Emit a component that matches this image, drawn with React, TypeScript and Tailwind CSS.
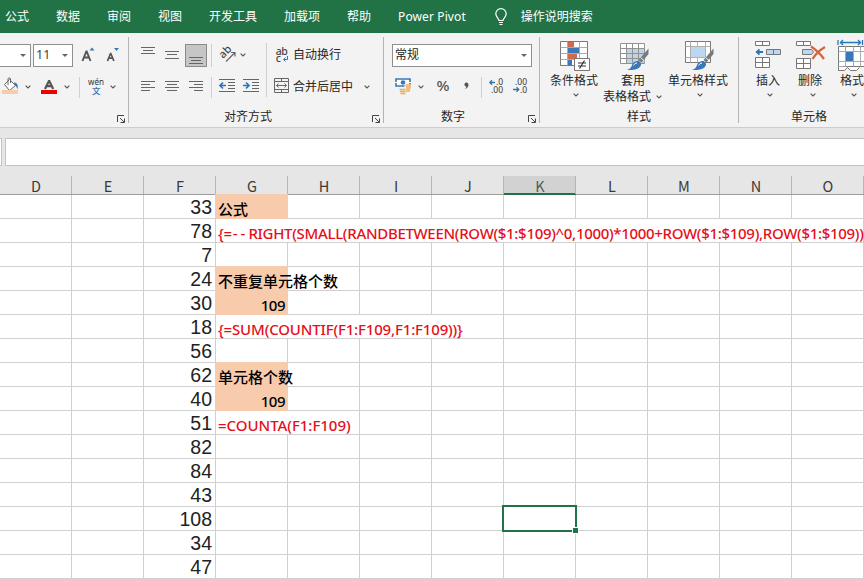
import type { ReactNode } from 'react';

const TABS = [
  { label: '公式', pos: 'ml-[5px]' },
  { label: '数据', pos: 'ml-[27px]' },
  { label: '审阅', pos: 'ml-[27px]' },
  { label: '视图', pos: 'ml-[27px]' },
  { label: '开发工具', pos: 'ml-[27px]' },
  { label: '加载项', pos: 'ml-[27px]' },
  { label: '帮助', pos: 'ml-[27px]' },
  { label: 'Power Pivot', pos: 'ml-[27px] tracking-[0.1px]' },
];

const COLUMNS = ['D', 'E', 'F', 'G', 'H', 'I', 'J', 'K', 'L', 'M', 'N', 'O'];

type Kind = 'title' | 'formula' | 'number';
type Row = { f: number; g?: ReactNode; kind?: Kind; span?: number; tracking?: string; selected?: boolean };

// span = how many columns the text of column G spills over
const ROWS: Row[] = [
  { f: 33, g: '公式', kind: 'title' },
  {
    f: 78,
    g: (
      <span>
        {'{='}
        <span className="pl-px tracking-[3px]">--</span>
        {'RIGHT(SMALL(RANDBETWEEN(ROW($1:$109)^0,1000)*1000+ROW($1:$109),ROW($1:$109)))}'}
      </span>
    ),
    kind: 'formula',
    span: 9,
    tracking: 'tracking-[-0.31px]',
  },
  { f: 7 },
  { f: 24, g: '不重复单元格个数', kind: 'title', span: 2 },
  { f: 30, g: '109', kind: 'number' },
  { f: 18, g: '{=SUM(COUNTIF(F1:F109,F1:F109))}', kind: 'formula', span: 4, tracking: 'tracking-[-0.16px]' },
  { f: 56 },
  { f: 62, g: '单元格个数', kind: 'title', span: 2 },
  { f: 40, g: '109', kind: 'number' },
  { f: 51, g: '=COUNTA(F1:F109)', kind: 'formula', span: 2, tracking: 'tracking-[-0.03px]' },
  { f: 82 },
  { f: 84 },
  { f: 43 },
  { f: 108, selected: true },
  { f: 34 },
  { f: 47 },
];

const SPAN: Record<number, string> = {
  1: 'col-span-1',
  2: 'col-span-2',
  4: 'col-span-4',
  9: 'col-span-9',
};

const KIND: Record<Kind, string> = {
  title: 'pl-[2px] pt-[3px] text-[15px] font-medium text-black',
  formula: "pl-[2px] pt-[6px] font-['Noto_Sans',sans-serif] text-[15px] font-medium text-[#e60f1a]",
  number: "justify-end pr-[2px] pt-[6px] font-['Noto_Sans',sans-serif] text-[15px] font-medium tracking-[-0.5px] text-black",
};

// Ribbon icons are drawn 1:1, as high as the row they sit in
function Icon({ w, h = 24, className = '', children }: { w: number; h?: number; className?: string; children: ReactNode }) {
  return (
    <svg width={w} height={h} viewBox={`0 0 ${w} ${h}`} className={'shrink-0 overflow-visible ' + className} fill="none">
      {children}
    </svg>
  );
}

function Chevron({ className = '' }: { className?: string }) {
  return (
    <svg width="6" height="4" viewBox="0 0 6 4" className={'shrink-0 ' + className} fill="none">
      <path d="M.6.6 3 3 5.4.6" stroke="#555" strokeWidth="1.1" />
    </svg>
  );
}

function Caret({ className = '' }: { className?: string }) {
  return (
    <svg width="6" height="3" viewBox="0 0 6 3" className={'shrink-0 ' + className}>
      <path d="M0 0h6L3 3z" fill="#666" />
    </svg>
  );
}

function Launcher() {
  return (
    <svg width="8" height="8" viewBox="0 0 8 8" className="mr-[3px] mb-[3px] shrink-0 self-end" fill="none" stroke="#444">
      <path d="M.5 7V.5H7M3 3l4 4M7.5 3.500V7.5H3.500" />
    </svg>
  );
}

function Divider() {
  return <div className="mt-1 h-[86px] w-px shrink-0 bg-[#b4b4b4]" />;
}

function Group({ width, label, launcher, labelPos = '', children }: { width: string; label?: string; launcher?: boolean; labelPos?: string; children: ReactNode }) {
  return (
    <div className={'flex shrink-0 flex-col ' + width}>
      {children}
      <div className="mt-auto flex h-[19px] items-center pb-px">
        <span className={'flex-1 ' + labelPos}>{label}</span>
        {launcher && <Launcher />}
      </div>
    </div>
  );
}

function BigButton({ className, icon, children }: { className: string; icon: ReactNode; children: ReactNode }) {
  return (
    <div className={'flex shrink-0 flex-col items-center whitespace-nowrap ' + className}>
      {icon}
      {children}
    </div>
  );
}

function Brush() {
  return (
    <>
      <path d="M28.500 7.500 18.500 19l3 2.500 7-8.500z" fill="#7a7a7a" />
      <path d="m20.500 16.500 4 3.500" stroke="#f3f3f3" />
      <path d="M17 20c2-.5 4.500 1.500 4 4-.8 3.500-6 5.500-14 5 3.500-1.200 4-2.500 5-5 .8-2.300 2.500-3.600 5-4z" fill="#3a78b8" />
      <path d="M13.500 24.500c.8-1.500 2-2.500 3.500-2.500" stroke="#fff" />
    </>
  );
}

function FontGroup() {
  return (
    <Group width="w-32" launcher>
      <div className="mt-[10px] flex h-6 items-center">
        <div className="flex h-[23px] w-[31px] items-center justify-end border border-l-0 border-[#8f8f8f] bg-white pr-[4px]">
          <Caret />
        </div>
        <div className="ml-[2px] flex h-[23px] w-10 items-center justify-between border border-[#8f8f8f] bg-white pr-[4px] pl-[2px] text-[12.500px] text-[#444]">
          11
          <Caret />
        </div>
        <Icon w={16} className="ml-[8px]">
          <path d="M1.500 18 5.300 8.500h.4L9.500 18M3 14.500h5" stroke="#555" strokeWidth="1.900" />
          <path d="M8.500 7.500h5l-2.500-3z" fill="#3a78b8" />
        </Icon>
        <Icon w={16} className="ml-[9px]">
          <path d="m1.500 18 3-7.500h.3L7.900 18M2.800 15.200h4" stroke="#555" strokeWidth="1.700" />
          <path d="M8 5h5l-2.500 3z" fill="#3a78b8" />
        </Icon>
      </div>
      <div className="mt-2 flex h-6 items-center">
        <Icon w={18}>
          <path d="m4.500 9.500 5-5 6 6-6 5z" fill="#fff" stroke="#666" />
          <path d="M8 10V4c0-1.500 2.500-1.500 2.500 0v4" stroke="#666" />
          <path d="M14 7.500c3 0 4.500 2.500 3.500 7-.5-2-1.500-3.500-2.500-4z" fill="#3a78b8" />
          <path d="M2 15h16v4H2z" fill="#f8cbad" />
        </Icon>
        <Chevron className="ml-[7px]" />
        <Icon w={16} className="ml-[10px]">
          <path d="M4 14 7.900 6h.4L12.200 14M5.500 11.200h5" stroke="#555" strokeWidth="2.200" />
          <path d="M0 15h16v4H0z" fill="#f00000" />
        </Icon>
        <Chevron className="ml-[7px]" />
        <div className="ml-[9px] h-[21px] w-px bg-[#cfcfcf]" />
        <Icon w={16} className="ml-[8px]">
          <text x="0" y="9.500" fontSize="9" textLength="16" lengthAdjust="spacingAndGlyphs" fill="#333">wén</text>
          <text x="4" y="18.500" fontSize="8.500" fontWeight="500" fill="#2e75b6">文</text>
        </Icon>
        <Chevron className="ml-[6px]" />
      </div>
    </Group>
  );
}

function AlignGroup() {
  return (
    <Group width="w-[254px]" label="对齐方式" labelPos="pl-[95px]" launcher>
      <div className="flex">
        <div className="flex w-[137px] flex-col">
          <div className="mt-[10px] flex h-6 items-center">
            <Icon w={14} className="ml-[12px]">
              <path d="M0 4.500h14M2 7.500h10M0 10.500h14" stroke="#666" />
            </Icon>
            <Icon w={14} className="ml-[10px]">
              <path d="M0 8.500h14M2 11.500h10M0 15.500h14" stroke="#666" />
            </Icon>
            <div className="ml-[6px] flex h-[23px] w-[22px] justify-center border border-[#8c8c8c] bg-[#c6c6c6]">
              <Icon w={14} h={21}>
                <path d="M0 12.500h14M2 15.500h10M0 18.500h14" stroke="#666" />
              </Icon>
            </div>
            <div className="ml-[4px] h-[23px] w-px bg-[#cfcfcf]" />
            <Icon w={17} className="ml-[7px]">
              <text transform="translate(4 16) rotate(-45)" fontSize="11" fontWeight="500" fill="#444">ab</text>
              <path d="M7 18.500 15.500 10M12 9.500h4v4" stroke="#666" strokeWidth="1.200" />
            </Icon>
            <Chevron className="ml-[4px]" />
          </div>
          <div className="mt-2 flex h-6 items-center">
            <Icon w={14} className="ml-[12px]">
              <path d="M0 6.500h14M0 9.500h9M0 12.500h14M0 15.500h9" stroke="#666" />
            </Icon>
            <Icon w={14} className="ml-[10px]">
              <path d="M0 6.500h14M2 9.500h10M0 12.500h14M2 15.500h10" stroke="#666" />
            </Icon>
            <Icon w={14} className="ml-[10px]">
              <path d="M0 6.500h14M5 9.500h9M0 12.500h14M5 15.500h9" stroke="#666" />
            </Icon>
            <div className="ml-[8px] h-[21px] w-px bg-[#cfcfcf]" />
            <Icon w={16} className="ml-[7px]">
              <path d="M0 4.500h16M9 7.500h7M9 10.500h7M9 13.500h7M0 16.500h16" stroke="#666" />
              <path d="M7 10.500H1.500M4 7.500l-3 3 3 3" stroke="#2e75b6" strokeWidth="1.700" />
            </Icon>
            <Icon w={16} className="ml-[8px]">
              <path d="M0 4.500h16M9 7.500h7M9 10.500h7M9 13.500h7M0 16.500h16" stroke="#666" />
              <path d="M0 10.500h5.500M3 7.500l3 3-3 3" stroke="#2e75b6" strokeWidth="1.700" />
            </Icon>
          </div>
        </div>
        <div className="mt-[10px] h-[54px] w-px bg-[#cfcfcf]" />
        <div className="flex flex-col">
          <div className="mt-[10px] flex h-6 items-center">
            <Icon w={13} className="ml-[9px]">
              <text x="-.3" y="11.500" fontSize="10.500" fontWeight="500" textLength="12" fill="#444">ab</text>
              <text x="-.3" y="19" fontSize="10.500" fontWeight="500" fill="#444">c</text>
              <path d="M11.500 13v3.500H8M9.500 14.500l-2 2 2 2" stroke="#2e75b6" />
            </Icon>
            <span className="ml-[4px]">自动换行</span>
          </div>
          <div className="mt-2 flex h-6 items-center">
            <Icon w={15} className="ml-[7px]">
              <path d="M.5 3.500h14v14H.5zM.5 6.500h14M.5 14.500h14M7.500 3.500v3M7.500 14.500v3" stroke="#666" />
              <path d="M2.500 10.500h10M4.500 8.500l-2 2 2 2M10.500 8.500l2 2-2 2" stroke="#2e75b6" />
            </Icon>
            <span className="ml-[4px]">合并后居中</span>
            <Chevron className="ml-[11px]" />
          </div>
        </div>
      </div>
    </Group>
  );
}

function NumberGroup() {
  return (
    <Group width="w-[155px]" label="数字" labelPos="pl-[57px]" launcher>
      <div className="mt-[10px] flex h-6 items-center">
        <div className="ml-[8px] flex h-[23px] w-[140px] items-center justify-between border border-[#8f8f8f] bg-white pr-[4px] pl-[2px]">
          常规
          <Caret />
        </div>
      </div>
      <div className="mt-2 flex h-6 items-center">
        <Icon w={16} className="ml-[11px]">
          <path d="M1 4h14v7H1z" fill="#fff" stroke="#3a78b8" strokeWidth="1.600" />
          <circle cx="8" cy="7.500" r="2.300" fill="#3a78b8" />
          <path d="M0 7.500h2M14 7.500h2" stroke="#fff" />
          <path d="M9.500 9.500H16V19H5v-5.500h4.500z" fill="#f3f3f3" />
          <path d="M10.500 10h5.500M11 12h5M4.500 14.500h6M5 16.500h5.500M5.500 18.500h5M11 14h4.500M11 16h4" stroke="#f0ad5c" strokeWidth="1.400" />
        </Icon>
        <Chevron className="ml-[7px]" />
        <Icon w={13} className="ml-[13px]">
          <text x="-.5" y="16" fontSize="14.500" fontWeight="500" textLength="13" lengthAdjust="spacingAndGlyphs" fill="#555">%</text>
        </Icon>
        <Icon w={5} className="ml-[14px]">
          <path d="M2.500 7.500a2 2 0 1 0-.2 4c0 1-.5 1.700-1.600 2.300C3 13.700 4.500 12 4.500 9.800c0-1.300-.8-2.300-2-2.300z" fill="#555" />
        </Icon>
        <div className="ml-[12px] h-[21px] w-px bg-[#cfcfcf]" />
        <Icon w={15} className="ml-[7px]">
          <path d="M6 7.500H1M3 5.200.8 7.500 3 9.800" stroke="#2e75b6" strokeWidth="1.300" />
          <text x="7" y="10" fontSize="8.500" fill="#333">.0</text>
          <text x="2" y="17.500" fontSize="8.500" fill="#333">.00</text>
        </Icon>
        <Icon w={15} className="ml-[9px]">
          <text x="2" y="10" fontSize="8.500" fill="#333">.00</text>
          <path d="M0 14.500h5.500M3.500 12.200l2.300 2.300-2.300 2.300" stroke="#2e75b6" strokeWidth="1.300" />
          <text x="7" y="17.500" fontSize="8.500" fill="#333">.0</text>
        </Icon>
      </div>
    </Group>
  );
}

function StyleGroup() {
  return (
    <Group width="w-[198px]" label="样式" labelPos="pl-[87px]">
      <div className="mt-2 flex items-start">
        <BigButton
          className="ml-[10px] w-12"
          icon={
            <Icon w={30} h={30} className="ml-[2px]">
              <path d="M.5.5h27v24H.5z" fill="#fff" stroke="#777" />
              <path d="M7.500.5v24M19.500.5v24M.5 6.500h27M.5 12.500h27M.5 18.500h27" stroke="#aaa" />
              <path d="M8 1h6v5H8zM8 13h9v5H8z" fill="#d2694a" />
              <path d="M8 7h11v5H8zM8 19h4v5H8z" fill="#3a78b8" />
              <path d="M14.500 17.500h15v12h-15z" fill="#fff" stroke="#777" />
              <path d="M18 22h8M18 25h8M24.500 19.500l-5 8" stroke="#333" strokeWidth="1.200" />
            </Icon>
          }
        >
          <span className="mt-[2px] leading-4">条件格式</span>
          <Chevron className="mt-[4px] ml-1" />
        </BigButton>
        <BigButton
          className="ml-[5px] w-[60px]"
          icon={
            <Icon w={30} h={30} className="ml-[4px]">
              <path d="M.5 2.500h24v20H.5z" fill="#fff" />
              <path d="M7 8h17v14H7z" fill="#bdd3e6" />
              <path d="M.5 2.500h24v20H.5zM.5 7.500h24M.5 12.500h24M.5 17.500h24M6.500 2.500v20M12.500 2.500v20M18.500 2.500v20" stroke="#929292" />
              <Brush />
            </Icon>
          }
        >
          <span className="mt-[2px] leading-4">套用</span>
          <div className="flex w-[60px] items-center leading-[15px]">
            <span>表格格式</span>
            <Chevron className="ml-[5px]" />
          </div>
        </BigButton>
        <BigButton
          className="ml-[5px] w-[60px]"
          icon={
            <Icon w={30} h={30} className="ml-[3px]">
              <path d="M.5.5h25v21H.5z" fill="#fff" stroke="#777" />
              <path d="M.5 5.500h25M.5 16.500h25M5.500.5v21M20.500.5v21M12.500.5v5M12.500 16.500v5" stroke="#b0b0b0" />
              <path d="M6 6h14v10H6z" fill="#bdd7ee" />
              <Brush />
            </Icon>
          }
        >
          <span className="mt-[2px] leading-4">单元格样式</span>
          <Chevron className="mt-[4px] ml-1" />
        </BigButton>
      </div>
    </Group>
  );
}

function CellsGroup() {
  return (
    <Group width="w-[125px]" label="单元格" labelPos="pl-[52px]">
      <div className="mt-2 flex items-start">
        <BigButton
          className="ml-[16px] w-[26px]"
          icon={
            <Icon w={26} h={30}>
              <path d="M.5.5h14v4H.5zM7.500.5v4M.5 16.500h14v10H.5zM7.500 16.500v10M.5 21.500h14" fill="#fff" stroke="#777" />
              <path d="M11.500 8.500h14v5h-14z" fill="#bdd7ee" stroke="#777" />
              <path d="M18.500 8.500v5" stroke="#777" />
              <path d="M8 11H2M4.500 8.300 1.700 11l2.800 2.700" stroke="#2e75b6" strokeWidth="1.800" />
            </Icon>
          }
        >
          <span className="mt-[2px] leading-4">插入</span>
          <Chevron className="mt-[4px] ml-1" />
        </BigButton>
        <BigButton
          className="ml-[15px] w-[30px]"
          icon={
            <Icon w={30} h={30}>
              <path d="M.5.500h14v4H.5zM7.500.5v4M.5 17.500h14v10H.5zM7.500 17.500v10M.5 22.500h14" fill="#fff" stroke="#777" />
              <path d="M6.500 8.500h9l2 2.500-2 2.500h-9z" fill="#bdd7ee" stroke="#777" />
              <path d="M15 5.500c4.500 3 9.500 7.500 13 12.500M29 6c-5 3-9.500 7-12.500 12" stroke="#d9633b" strokeWidth="2.200" />
            </Icon>
          }
        >
          <span className="mt-[2px] mr-[2px] leading-4">删除</span>
          <Chevron className="mt-[4px] ml-[3px]" />
        </BigButton>
        <BigButton
          className="ml-[11px] w-[30px]"
          icon={
            <Icon w={30} h={30}>
              <path d="M1-1v5M25.500-1v5M3 1.500h21M6-1 3.500 1.500 6 4M21-1l2.500 2.500L21 4" stroke="#2e75b6" strokeWidth="1.300" />
              <path d="M1.500 5.500h28v20h-28z" fill="#fff" stroke="#777" />
              <path d="M1.500 10.500h28M1.500 20.500h28M8.500 5.500v20M16.500 5.500v20M23.500 5.500v20" stroke="#aaa" />
              <path d="M9 11h7v9H9z" fill="#3a78b8" />
              <path d="M1.500 25.500v4h6l3-3 3 3h6l3-3" fill="#fff" stroke="#777" />
            </Icon>
          }
        >
          <span className="mt-[2px] leading-4">格式</span>
          <Chevron className="mt-[4px] ml-1" />
        </BigButton>
      </div>
    </Group>
  );
}

function Selection() {
  return (
    <div className="absolute -top-[2px] -left-[2px] z-10 h-[27px] w-[75px] border-2 border-[#217346]">
      <div className="absolute -right-[4px] -bottom-[4px] h-[7px] w-[7px] border border-white bg-[#217346]" />
    </div>
  );
}

function SheetRow({ row }: { row: Row }) {
  const span = row.g ? (row.span ?? 1) : 0;
  const filled = row.kind === 'title' || row.kind === 'number';
  const rest = COLUMNS.slice(3 + span);
  return (
    <div className="grid h-6 grid-cols-[repeat(12,72px)] border-b border-[#d0d0d0]">
      <div className="border-r border-[#d0d0d0]" />
      <div className="border-r border-[#d0d0d0]" />
      <div className="flex items-center justify-end border-r border-[#d0d0d0] pt-[2px] pr-[3px] font-['Liberation_Sans',sans-serif] text-[19.500px] leading-none text-[#222]">
        {row.f}
      </div>
      {row.g && row.kind && (
        <div className={'relative h-[23px] border-r border-[#d0d0d0] ' + SPAN[span]}>
          {filled && <div className="absolute -top-px -left-px h-[25px] w-[73px] bg-[#f8cbad]" />}
          <div className={'relative flex h-[23px] items-center leading-none whitespace-nowrap ' + KIND[row.kind] + ' ' + (row.tracking ?? '')}>
            {row.g}
          </div>
        </div>
      )}
      {rest.map((c) => (
        <div key={c} className="relative border-r border-[#d0d0d0]">
          {row.selected && c === 'K' && <Selection />}
        </div>
      ))}
    </div>
  );
}

export default function App() {
  return (
    <div className="flex h-[579px] w-[864px] flex-col overflow-hidden bg-white font-['Noto_Sans','Noto_Sans_CJK_SC',sans-serif] text-xs text-[#262626]">
      <nav className="flex h-[33px] shrink-0 items-center bg-[#217346] whitespace-nowrap text-white">
        {TABS.map((t) => (
          <span key={t.label} className={t.pos}>
            {t.label}
          </span>
        ))}
        <Icon w={12} h={18} className="ml-[29px]">
          <path d="M4 12.500c0-2-3.200-3.300-3.200-6.700a5.200 5.200 0 0 1 10.400 0c0 3.400-3.200 4.700-3.200 6.700zM4 14.500h4M4.500 16.500h3" stroke="#fff" strokeWidth="1.200" />
        </Icon>
        <span className="ml-[14px]">操作说明搜索</span>
      </nav>

      <div className="flex h-[95px] shrink-0 border-b border-[#cdcdcd] bg-[#f3f3f3] whitespace-nowrap">
        <FontGroup />
        <Divider />
        <AlignGroup />
        <Divider />
        <NumberGroup />
        <Divider />
        <StyleGroup />
        <Divider />
        <CellsGroup />
      </div>

      <div className="flex h-12 shrink-0 bg-[#e6e6e6] pt-[10px]">
        <div className="h-7 w-[2px] border-y border-r border-[#c3c3c3] bg-white" />
        <div className="ml-[3px] h-7 flex-1 border border-r-0 border-[#c3c3c3] bg-white" />
      </div>

      <div className="grid h-[19px] shrink-0 grid-cols-[repeat(12,72px)] border-b border-[#9c9c9c] bg-[#e6e6e6]">
        {COLUMNS.map((c) => (
          <div
            key={c}
            className={
              "flex h-[18px] items-center justify-center border-r pt-[3px] pl-px font-['Noto_Sans_CJK_SC',sans-serif] text-[14.500px] leading-none " +
              (c === 'K'
                ? 'border-r-[#b5b5b5] bg-[#d2d2d2] text-[#4a5f54] shadow-[0_1px_0_#217346,inset_0_-1px_0_#217346]'
                : 'border-[#b5b5b5] text-[#3a3a3a]')
            }
          >
            {c}
          </div>
        ))}
      </div>

      <div className="flex flex-col font-['Noto_Sans_CJK_SC',sans-serif]">
        {ROWS.map((row, i) => (
          <SheetRow key={i} row={row} />
        ))}
      </div>
    </div>
  );
}
